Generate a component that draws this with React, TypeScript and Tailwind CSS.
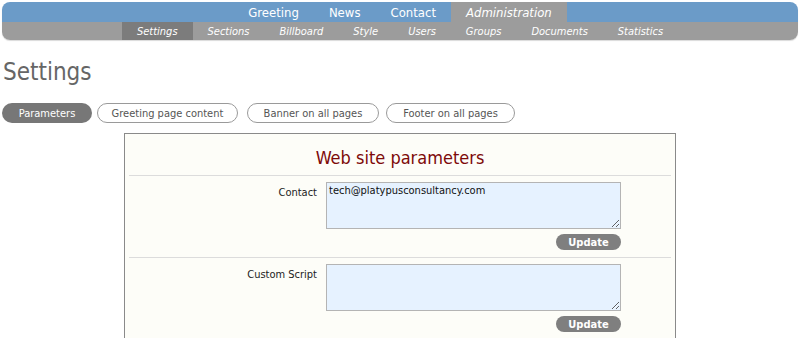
const font = { fontFamily: '"DejaVu Sans Condensed", "DejaVu Sans", sans-serif' };

const topItems = ['Greeting', 'News', 'Contact', 'Administration'];
const subItems = ['Settings', 'Sections', 'Billboard', 'Style', 'Users', 'Groups', 'Documents', 'Statistics'];

const tabs = [
  { label: 'Parameters', w: 'w-[90px]', ml: 'ml-0', active: true },
  { label: 'Greeting page content', w: 'w-[141px]', ml: 'ml-[5px]', active: false },
  { label: 'Banner on all pages', w: 'w-[132px]', ml: 'ml-[9px]', active: false },
  { label: 'Footer on all pages', w: 'w-[129px]', ml: 'ml-[7px]', active: false },
];

const NavBar = () => (
  <nav className="mx-[2px] mt-[2px] w-[796px] overflow-hidden rounded-[8px] shadow-[0_1px_1px_rgba(0,0,0,0.15)]">
    <div className="flex h-[20px] justify-center bg-[#6b9bc8]">
      {topItems.map((item) => (
        <span
          key={item}
          className={`flex items-center px-[15px] text-[13px] leading-none text-white ${
            item === 'Administration' ? 'bg-[#9c9c9c] italic' : ''
          }`}
        >
          {item}
        </span>
      ))}
    </div>
    <div className="flex h-[18px] justify-center bg-[#9c9c9c]">
      {subItems.map((item) => (
        <span
          key={item}
          className={`flex items-center px-[15px] text-[11px] italic leading-none text-white ${
            item === 'Settings' ? 'bg-[#7c7c7c]' : ''
          }`}
        >
          {item}
        </span>
      ))}
    </div>
  </nav>
);

const ParamRow = ({ label, value }: { label: string; value: string }) => (
  <div className="pt-[6px]">
    <div className="flex">
      <label className="w-[192px] pt-[3px] text-right text-[11px] text-[#222]">{label}</label>
      <textarea
        defaultValue={value}
        className="ml-[9px] h-[47px] w-[295px] border border-[#b4b4b4] bg-[#e6f2ff] px-[2px] py-[1px] text-[11px] leading-[14px] text-[#111] outline-none"
        style={font}
      />
    </div>
    <div className="flex pl-[431px] pt-[5px]">
      <button
        type="button"
        className="h-[16px] w-[65px] rounded-full bg-[#7f7f7f] text-[11px] font-bold leading-none text-white"
        style={font}
      >
        Update
      </button>
    </div>
  </div>
);

export default function App() {
  return (
    <div className="h-[338px] w-[800px] overflow-hidden bg-white" style={font}>
      <NavBar />
      <h1 className="ml-[3px] mt-[17px] text-[24px] leading-[30px] text-[#666]">Settings</h1>

      <div className="ml-[2px] mt-[16px] flex">
        {tabs.map((t) => (
          <span
            key={t.label}
            className={`${t.w} ${t.ml} flex h-[20px] items-center justify-center rounded-full text-[11px] leading-none ${
              t.active ? 'bg-[#777] text-white' : 'border border-[#9a9a9a] bg-white text-[#555]'
            }`}
          >
            {t.label}
          </span>
        ))}
      </div>

      <section className="mx-auto mt-[10px] h-[220px] w-[552px] border border-[#8a8a8a] bg-[#fdfdf8]">
        <h2 className="pt-[13px] text-center text-[18px] leading-[22px] text-[#7d0a0a]">Web site parameters</h2>
        <div className="mx-[4px] mt-[6px] border-t border-[#dcdcdc]" />
        <ParamRow label="Contact" value="tech@platypusconsultancy.com" />
        <div className="mx-[4px] mt-[7px] border-t border-[#dcdcdc]" />
        <ParamRow label="Custom Script" value="" />
      </section>
    </div>
  );
}
